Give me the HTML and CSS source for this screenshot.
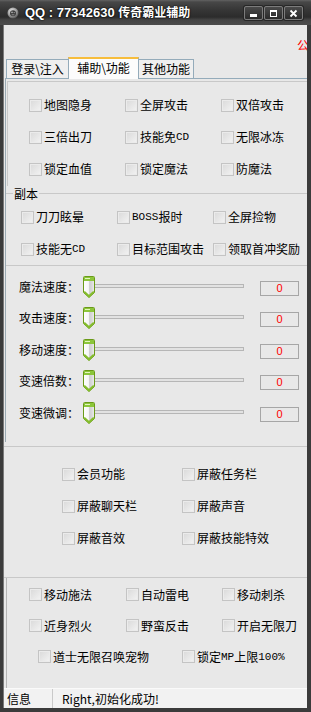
FILE: index.html
```html
<!DOCTYPE html>
<html lang="zh-CN">
<head>
<meta charset="utf-8">
<title>QQ : 77342630 传奇霸业辅助</title>
<link rel="stylesheet" href="styles.css">
</head>
<body>
<div class="window">
  <div class="titlebar">
    <svg class="app-icon" viewBox="0 0 12 12" width="12" height="12">
      <defs>
        <radialGradient id="ig" cx="0.4" cy="0.35" r="0.7">
          <stop offset="0" stop-color="#f0f0f0"/>
          <stop offset="0.6" stop-color="#9a9a9a"/>
          <stop offset="1" stop-color="#4a4a4a"/>
        </radialGradient>
      </defs>
      <circle cx="6" cy="6" r="5.5" fill="url(#ig)"/>
      <circle cx="6" cy="6.3" r="3" fill="#3c3c3c"/>
      <circle cx="5" cy="5.3" r="0.9" fill="#b0b0b0"/>
      <circle cx="7.2" cy="5.6" r="0.7" fill="#a0a0a0"/>
      <rect x="4.6" y="7.4" width="2.8" height="0.9" fill="#9a9a9a"/>
    </svg>
    <div class="title">QQ : 77342630 <span class="cjk">传奇霸业辅助</span></div>
    <div class="caption-buttons">
      <div class="cbtn">
        <svg viewBox="0 0 17 12" width="17" height="12"><rect x="5" y="7" width="7" height="3" fill="#fff"/></svg>
      </div>
      <div class="cbtn">
        <svg viewBox="0 0 17 12" width="17" height="12"><rect x="5.5" y="3.5" width="6" height="6" fill="none" stroke="#fff"/><rect x="5" y="3" width="7" height="2" fill="#fff"/></svg>
      </div>
      <div class="cbtn">
        <svg viewBox="0 0 17 12" width="17" height="12"><path d="M5.5 3.5 L11.5 9.5 M11.5 3.5 L5.5 9.5" stroke="#fff" stroke-width="1.8" fill="none"/></svg>
      </div>
    </div>
  </div>

  <div class="client">
    <div class="notice"><span>公</span></div>

    <div class="tabs">
      <div class="tab t1">登录\注入</div>
      <div class="tab t2 active">辅助\功能</div>
      <div class="tab t3">其他功能</div>
    </div>

    <div class="panel">
      <div class="group-a">
        <div class="grid3 grid-a">
          <label class="cb"><span class="box"></span>地图隐身</label>
          <label class="cb"><span class="box"></span>全屏攻击</label>
          <label class="cb"><span class="box"></span>双倍攻击</label>
          <label class="cb"><span class="box"></span>三倍出刀</label>
          <label class="cb"><span class="box"></span>技能免<span class="en">CD</span></label>
          <label class="cb"><span class="box"></span>无限冰冻</label>
          <label class="cb"><span class="box"></span>锁定血值</label>
          <label class="cb"><span class="box"></span>锁定魔法</label>
          <label class="cb"><span class="box"></span>防魔法</label>
        </div>
      </div>

      <div class="legend"><span class="ln-l"></span><span class="legend-text">副本</span><span class="ln-r"></span></div>
      <div class="grid3 grid-b">
        <label class="cb"><span class="box"></span>刀刀眩晕</label>
        <label class="cb"><span class="box"></span><span class="en">BOSS</span>报时</label>
        <label class="cb"><span class="box"></span>全屏捡物</label>
        <label class="cb"><span class="box"></span>技能无<span class="en">CD</span></label>
        <label class="cb"><span class="box"></span>目标范围攻击</label>
        <label class="cb"><span class="box"></span>领取首冲奖励</label>
      </div>

      <div class="sliders">
        <div class="srow">
          <span class="slabel">魔法速度：</span>
          <div class="slider"><div class="track"></div>
            <svg class="thumb" viewBox="0 0 12 22" width="12" height="22"><defs><linearGradient id="tb" x1="0" x2="1" y1="0" y2="0"><stop offset="0" stop-color="#ffffff"/><stop offset="0.45" stop-color="#f6f6f6"/><stop offset="0.55" stop-color="#cfcfcf"/><stop offset="0.75" stop-color="#d8d8d8"/><stop offset="1" stop-color="#efefef"/></linearGradient></defs><path d="M0.5 1.5 Q0.5 0.5 1.5 0.5 H10.5 Q11.5 0.5 11.5 1.5 V16.5 L6 21.5 L0.5 16.5 Z" fill="url(#tb)" stroke="#6a9a18"/><rect x="1" y="1" width="10" height="4" fill="#8cc63a"/><rect x="2" y="2" width="5" height="1" fill="#e4f6bc"/><path d="M1.2 15.6 L6 20.3 L10.8 15.6" fill="none" stroke="#84bd2c" stroke-width="2"/></svg>
          </div>
          <div class="val">0</div>
        </div>
        <div class="srow">
          <span class="slabel">攻击速度：</span>
          <div class="slider"><div class="track"></div>
            <svg class="thumb" viewBox="0 0 12 22" width="12" height="22"><path d="M0.5 1.5 Q0.5 0.5 1.5 0.5 H10.5 Q11.5 0.5 11.5 1.5 V16.5 L6 21.5 L0.5 16.5 Z" fill="url(#tb)" stroke="#6a9a18"/><rect x="1" y="1" width="10" height="4" fill="#8cc63a"/><rect x="2" y="2" width="5" height="1" fill="#e4f6bc"/><path d="M1.2 15.6 L6 20.3 L10.8 15.6" fill="none" stroke="#84bd2c" stroke-width="2"/></svg>
          </div>
          <div class="val">0</div>
        </div>
        <div class="srow">
          <span class="slabel">移动速度：</span>
          <div class="slider"><div class="track"></div>
            <svg class="thumb" viewBox="0 0 12 22" width="12" height="22"><path d="M0.5 1.5 Q0.5 0.5 1.5 0.5 H10.5 Q11.5 0.5 11.5 1.5 V16.5 L6 21.5 L0.5 16.5 Z" fill="url(#tb)" stroke="#6a9a18"/><rect x="1" y="1" width="10" height="4" fill="#8cc63a"/><rect x="2" y="2" width="5" height="1" fill="#e4f6bc"/><path d="M1.2 15.6 L6 20.3 L10.8 15.6" fill="none" stroke="#84bd2c" stroke-width="2"/></svg>
          </div>
          <div class="val">0</div>
        </div>
        <div class="srow">
          <span class="slabel">变速倍数：</span>
          <div class="slider"><div class="track"></div>
            <svg class="thumb" viewBox="0 0 12 22" width="12" height="22"><path d="M0.5 1.5 Q0.5 0.5 1.5 0.5 H10.5 Q11.5 0.5 11.5 1.5 V16.5 L6 21.5 L0.5 16.5 Z" fill="url(#tb)" stroke="#6a9a18"/><rect x="1" y="1" width="10" height="4" fill="#8cc63a"/><rect x="2" y="2" width="5" height="1" fill="#e4f6bc"/><path d="M1.2 15.6 L6 20.3 L10.8 15.6" fill="none" stroke="#84bd2c" stroke-width="2"/></svg>
          </div>
          <div class="val">0</div>
        </div>
        <div class="srow">
          <span class="slabel">变速微调：</span>
          <div class="slider"><div class="track"></div>
            <svg class="thumb" viewBox="0 0 12 22" width="12" height="22"><path d="M0.5 1.5 Q0.5 0.5 1.5 0.5 H10.5 Q11.5 0.5 11.5 1.5 V16.5 L6 21.5 L0.5 16.5 Z" fill="url(#tb)" stroke="#6a9a18"/><rect x="1" y="1" width="10" height="4" fill="#8cc63a"/><rect x="2" y="2" width="5" height="1" fill="#e4f6bc"/><path d="M1.2 15.6 L6 20.3 L10.8 15.6" fill="none" stroke="#84bd2c" stroke-width="2"/></svg>
          </div>
          <div class="val">0</div>
        </div>
      </div>
    </div>

    <div class="sec-d">
      <label class="cb"><span class="box"></span>会员功能</label>
      <label class="cb"><span class="box"></span>屏蔽任务栏</label>
      <label class="cb"><span class="box"></span>屏蔽聊天栏</label>
      <label class="cb"><span class="box"></span>屏蔽声音</label>
      <label class="cb"><span class="box"></span>屏蔽音效</label>
      <label class="cb"><span class="box"></span>屏蔽技能特效</label>
    </div>

    <div class="sec-e">
      <div class="grid-e">
        <label class="cb"><span class="box"></span>移动施法</label>
        <label class="cb"><span class="box"></span>自动雷电</label>
        <label class="cb"><span class="box"></span>移动刺杀</label>
        <label class="cb"><span class="box"></span>近身烈火</label>
        <label class="cb"><span class="box"></span>野蛮反击</label>
        <label class="cb"><span class="box"></span>开启无限刀</label>
      </div>
      <div class="row-e3">
        <label class="cb first"><span class="box"></span>道士无限召唤宠物</label>
        <label class="cb"><span class="box"></span>锁定<span class="en">MP</span>上限<span class="en">100%</span></label>
      </div>
    </div>

    <div class="status">
      <div class="status-cell">信息</div>
      <div class="status-text">Right,初始化成功!</div>
    </div>
  </div>
</div>
</body>
</html>
```

FILE: styles.css
```css
html, body {
  margin: 0;
  padding: 0;
  background: #3a3a3a;
}

.window {
  width: 311px;
  height: 712px;
  display: flex;
  flex-direction: column;
  background: #3b3b3b;
  font-family: "Noto Sans CJK SC", "Liberation Sans", sans-serif;
  font-size: 12px;
  color: #000;
  overflow: hidden;
}

/* ---------- title bar ---------- */
.titlebar {
  flex: none;
  height: 25px;
  display: flex;
  align-items: center;
  background: linear-gradient(#626262 0, #474747 2px, #363636 10px, #2c2c2c 17px, #454545 20px, #4c4c4c 25px);
}

.app-icon {
  flex: none;
  margin-left: 7px;
  margin-right: 6px;
}

.title {
  flex: 1;
  color: #fff;
  font-family: "Liberation Sans", "Noto Sans CJK SC", sans-serif;
  font-weight: bold;
  font-size: 13px;
  line-height: 16px;
  white-space: nowrap;
  text-shadow: 0 0 2px #000, 0 0 1px #000;
}

.title .cjk {
  font-family: "Noto Sans CJK SC", sans-serif;
  font-size: 12px;
}

.caption-buttons {
  flex: none;
  display: flex;
  gap: 1px;
  margin-right: 8px;
  margin-top: 1px;
}

.cbtn {
  width: 19px;
  height: 14px;
  box-sizing: border-box;
  border: 1px solid #7c7c7c;
  border-radius: 2px;
  background: linear-gradient(#4a4a4a, #2a2a2a);
  box-shadow: 0 0 0 1px #262626;
  display: flex;
}

.cbtn svg {
  display: block;
}

/* ---------- client ---------- */
.client {
  flex: 1;
  display: flex;
  flex-direction: column;
  margin: 0 4px 4px 3px;
  border-left: 1px solid #7a7a7a;
  background: #e8e8e8;
  min-height: 0;
  overflow: hidden;
}

.notice {
  flex: none;
  height: 32px;
  padding-left: 293px;
  overflow: hidden;
  white-space: nowrap;
  color: #ff0000;
}

.notice span {
  display: block;
  margin-top: 14px;
  line-height: 12px;
}

/* ---------- tabs ---------- */
.tabs {
  flex: none;
  height: 21px;
  display: flex;
  align-items: flex-end;
  padding-left: 2px;
}

.tab {
  box-sizing: border-box;
  height: 19px;
  border: 1px solid #94abba;
  border-bottom: 0;
  background: #efefef;
  text-align: center;
  line-height: 17px;
  white-space: nowrap;
}

.t1 { width: 63px; }
.t2 { width: 71px; margin-left: -1px; }
.t3 { width: 56px; margin-left: -1px; }

.tab.active {
  height: 22px;
  margin-bottom: -1px;
  border-top: 2px solid #f7bd3c;
  background: #fcfcfc;
  line-height: 18px;
  position: relative;
  z-index: 1;
}

/* ---------- panel ---------- */
.panel {
  flex: none;
  height: 364px;
  box-sizing: border-box;
  margin-left: 1px;
  border-top: 1px solid #94abba;
  border-left: 1px solid #9aa9b2;
}

.group-a {
  margin: 2px 0 0 1px;
  border-top: 1px solid #c8c8c8;
  border-left: 1px solid #c8c8c8;
  padding: 7px 0 1px 0;
}

.grid3 {
  display: grid;
  grid-template-columns: 96px 96px 96px;
  grid-auto-rows: 32px;
  align-items: center;
}

.grid-a { padding-left: 21px; }
.grid-b { padding-left: 15px; }

.cb {
  display: flex;
  align-items: center;
  white-space: nowrap;
  line-height: 16px;
}

.box {
  flex: none;
  width: 13px;
  height: 13px;
  box-sizing: border-box;
  border: 1px solid #c4c4c4;
  background: linear-gradient(135deg, #d9d9d9, #f3f3f3);
  box-shadow: inset 0 0 0 1px #ebebeb;
  margin-right: 2px;
}

.en {
  font-family: "Liberation Mono", monospace;
  font-size: 11px;
}

.legend {
  height: 15px;
  display: flex;
  align-items: center;
}

.ln-l {
  width: 7px;
  height: 1px;
  background: #c8c8c8;
}

.legend-text {
  line-height: 14px;
  padding: 0 1px;
}

.ln-r {
  flex: 1;
  height: 1px;
  background: #c8c8c8;
}

/* ---------- sliders ---------- */
.sliders {
  border-top: 1px solid #c8c8c8;
  padding-top: 5px;
}

.srow {
  height: 31.5px;
  display: flex;
  align-items: center;
  padding-left: 13px;
}

.slabel {
  width: 64px;
  flex: none;
  white-space: nowrap;
  line-height: 16px;
}

.slider {
  flex: none;
  width: 161px;
  height: 22px;
  position: relative;
}

.track {
  position: absolute;
  left: 2px;
  right: 0;
  top: 8px;
  height: 4px;
  box-sizing: border-box;
  border: 1px solid #b6b6b6;
  background: #e2e2e2;
}

.thumb {
  position: absolute;
  left: 0;
  top: 0;
  display: block;
}

.val {
  flex: none;
  width: 39px;
  height: 15px;
  box-sizing: border-box;
  margin-left: 16px;
  margin-top: 3px;
  border: 1px solid #a6a6a6;
  background: #e8e8e8;
  color: #ff0000;
  text-align: center;
  font-family: "Liberation Sans", sans-serif;
  font-size: 11px;
  line-height: 13px;
}

/* ---------- section D ---------- */
.sec-d {
  flex: none;
  margin-top: 4px;
  border-top: 1px solid #c8c8c8;
  border-bottom: 1px solid #c8c8c8;
  padding: 11px 0 23px 58px;
  display: grid;
  grid-template-columns: 120px 120px;
  grid-auto-rows: 32px;
  align-items: center;
}

/* ---------- section E ---------- */
.sec-e {
  flex: none;
  height: 110px;
  box-sizing: border-box;
  margin-left: 2px;
  border-left: 1px solid #b4b4b4;
  padding-top: 1px;
}

.grid-e {
  display: grid;
  grid-template-columns: 97px 96px 96px;
  grid-auto-rows: 31px;
  align-items: center;
  padding-left: 22px;
}

.row-e3 {
  height: 31px;
  display: flex;
  align-items: center;
  padding-left: 31px;
}

.row-e3 .first {
  width: 144px;
}

/* ---------- status bar ---------- */
.status {
  flex: none;
  height: 20px;
  box-sizing: border-box;
  border-top: 1px solid #fafafa;
  background: #f2f2f2;
  display: flex;
  align-items: stretch;
  line-height: 19px;
}

.status-cell {
  width: 49px;
  box-sizing: border-box;
  padding-left: 3px;
  border-right: 1px solid #c9c9c9;
}

.status-text {
  padding-left: 9px;
  white-space: nowrap;
}
```
